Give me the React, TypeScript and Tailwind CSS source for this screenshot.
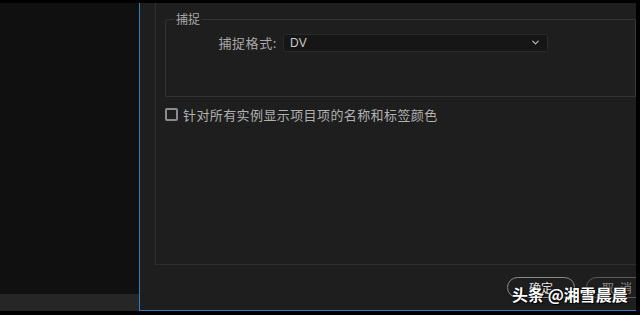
import { ChevronDown } from "lucide-react";

const cjk = { fontFamily: '"Noto Sans CJK SC", "Noto Sans", sans-serif' };

export default function App() {
  return (
    <div className="relative w-[640px] h-[315px] bg-black overflow-hidden pt-[3px]" style={cjk}>
      <div className="flex h-[308px]">
        {/* left panel */}
        <div className="w-[139px] flex flex-col">
          <div className="flex-1 bg-[#101010]" />
          <div className="h-[17px] bg-[#262626]" />
        </div>

        {/* dialog */}
        <div className="w-[497px] flex flex-col bg-[#1e1e1e] border-l border-b border-[#2f7fc0] pl-[15px]">
          <div className="h-[262px] border-l border-b border-[#2e2e2e] pl-[9px] pt-[10px]">
            <fieldset className="h-[84px] border border-[#333333] rounded-tl-[4px] border-r-[#3a3a3a] px-0 m-0 relative">
              <legend className="ml-[8px] px-[2px] text-[12px] leading-none text-[#a8a8a8]">捕捉</legend>
              <div className="flex items-center mt-[8px]">
                <span className="w-[115px] text-right pr-[4px] text-[13px] tracking-[0.6px] text-[#a8a8a8]">捕捉格式:</span>
                <div className="ml-[2px] w-[265px] h-[18px] bg-[#161616] border border-[#2a2a2a] rounded-[2px] flex items-center justify-between px-[6px]">
                  <span className="text-[12px] leading-none text-[#c8c8c8]" style={{ fontFamily: '"Liberation Sans", sans-serif' }}>DV</span>
                  <ChevronDown className="w-[11px] h-[11px] text-[#bdbdbd]" strokeWidth={2.5} />
                </div>
              </div>
            </fieldset>
            <label className="flex items-center gap-[5px] mt-[8px]">
              <span className="w-[13px] h-[13px] border-2 border-[#8c8c8c] rounded-[2px]" />
              <span className="text-[13px] tracking-[0.4px] text-[#b0b0b0]">针对所有实例显示项目项的名称和标签颜色</span>
            </label>
          </div>
          <div className="flex-1 flex items-center gap-[11px] pl-[352px]">
            <div className="w-[68px] h-[21px] shrink-0 rounded-full border border-[#8a8a8a] flex items-center justify-center text-[12px] text-[#e0e0e0]">
              确定
            </div>
            <div className="w-[68px] h-[21px] shrink-0 rounded-full border border-[#5a5a5a] flex items-center justify-center text-[12px] tracking-[6px] text-[#8a8a8a]">
              取消
            </div>
          </div>
        </div>
        <div className="flex-1 bg-black" />
      </div>

      {/* watermark */}
      <div
        className="absolute left-[512px] top-[286px] text-[16px] font-bold leading-none text-white whitespace-nowrap"
        style={{ textShadow: "0 0 2px #000, 1px 1px 1px #000" }}
      >
        头条 @湘雪晨晨
      </div>
    </div>
  );
}
